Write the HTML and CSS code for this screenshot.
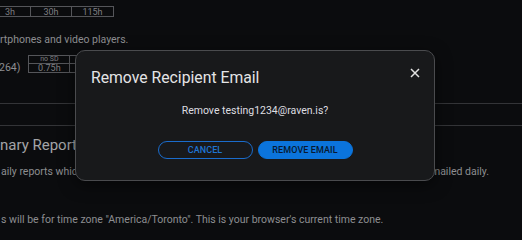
FILE: index.html
```html
<!DOCTYPE html>
<html>
<head>
<meta charset="utf-8">
<link rel="stylesheet" href="styles.css">
</head>
<body>
<div class="page">
  <table class="hours">
    <tr><td>3h</td><td>30h</td><td class="wide">115h</td></tr>
  </table>
  <p class="text l1">rtphones and video players.</p>
  <div class="codec">
    <span class="text codec-label">264)</span>
    <table class="mini">
      <tr class="mini-head"><td class="c1">no SD</td><td class="c2"></td><td class="c3"></td></tr>
      <tr class="mini-body"><td class="c1">0.75h</td><td class="c2"></td><td class="c3"></td></tr>
    </table>
  </div>
  <hr class="rule r1">
  <hr class="rule r2">
  <h2 class="heading">nary Report</h2>
  <p class="text daily"><span>aily reports whic</span><span class="tail">mailed daily.</span></p>
  <p class="text tz">s will be for time zone "America/Toronto". This is your browser's current time zone.</p>
</div>

<div class="dialog">
  <div class="dialog-head">
    <h1 class="dialog-title">Remove Recipient Email</h1>
    <svg class="close" width="10" height="10" viewBox="0 0 10 10"><path d="M1 1 L9 9 M9 1 L1 9" stroke="#e2e2e2" stroke-width="1.5" fill="none"/></svg>
  </div>
  <p class="dialog-msg">Remove testing1234@raven.is?</p>
  <div class="dialog-actions">
    <button class="btn btn-outline">CANCEL</button>
    <button class="btn btn-fill">REMOVE EMAIL</button>
  </div>
</div>
</body>
</html>
```
FILE: styles.css
```css
html, body {
  margin: 0;
  padding: 0;
}
body {
  width: 522px;
  height: 236px;
  overflow: hidden;
  background: #0b0c0e;
  font-family: Roboto, "Liberation Sans", sans-serif;
  position: relative;
}
.page {
  padding-top: 6px;
}
.hours {
  border-collapse: collapse;
  margin-left: -11px;
  font-size: 9px;
  color: #7e7f82;
}
.hours td {
  border: 1px solid #55565a;
  width: 41px;
  height: 8px;
  padding: 0;
  line-height: 8px;
  text-align: center;
  vertical-align: top;
  padding-top: 1px;
  box-sizing: border-box;
}
.hours td.wide {
  width: 42px;
}
.text {
  font-size: 10.5px;
  line-height: 14px;
  color: #8d8e91;
  margin: 0;
  white-space: nowrap;
}
.l1 {
  margin-top: 16px;
}
.codec {
  display: flex;
  align-items: flex-start;
  margin-top: 8px;
  gap: 8px;
  margin-left: -1px;
}
.codec-label {
  margin-top: 6px;
}
.mini {
  border-collapse: collapse;
  color: #7e7f82;
}
.mini td {
  border: 1px solid #55565a;
  padding: 0;
  height: 7px;
  text-align: center;
  white-space: nowrap;
}
.mini-head td {
  font-size: 7px;
  line-height: 7px;
}
.mini-body td {
  font-size: 9px;
  line-height: 7px;
  vertical-align: top;
  padding-top: 1px;
}
.mini .c1 { width: 40px; }
.mini .c2 { width: 8px; }
.mini .c3 { width: 30px; }
.rule {
  border: 0;
  border-top: 1px solid #333437;
  margin: 0;
  height: 0;
}
.r1 { margin-top: 28px; }
.r2 { margin-top: 21px; }
.heading {
  margin: 9px 0 0 0;
  font-size: 15px;
  line-height: 20px;
  font-weight: 400;
  color: #a3a4a7;
  white-space: nowrap;
}
.daily {
  margin-top: 10px;
  display: flex;
  padding-left: 1px;
}
.tail {
  margin-left: auto;
  margin-right: 33px;
}
.tz {
  margin-top: 34px;
  padding-left: 1px;
}

.dialog {
  position: absolute;
  left: 75px;
  top: 50px;
  width: 360px;
  box-sizing: border-box;
  background: #18191b;
  border: 1px solid #4a4b4e;
  border-radius: 10px;
  padding: 17px 14px 21px 15px;
  box-shadow: 0 4px 16px rgba(0,0,0,0.5);
}
.dialog-head {
  display: flex;
  justify-content: space-between;
  align-items: flex-start;
}
.dialog-title {
  margin: 0;
  font-size: 15.75px;
  line-height: 20px;
  font-weight: 400;
  color: #e4e4e6;
}
.close {
  display: block;
  margin-top: 0;
}
.dialog-msg {
  margin: 16px 0 0 0;
  font-size: 10.5px;
  line-height: 14px;
  color: #dedee0;
  text-align: center;
  padding-right: 1px;
}
.dialog-actions {
  margin-top: 23px;
  display: flex;
  justify-content: center;
  gap: 5px;
  padding-right: 1px;
}
.btn {
  width: 95px;
  height: 18px;
  box-sizing: border-box;
  border-radius: 9px;
  font-family: Roboto, "Liberation Sans", sans-serif;
  font-size: 9px;
  font-weight: 500;
  letter-spacing: 0.1px;
  padding: 0;
  line-height: 16px;
  cursor: pointer;
}
.btn-outline {
  background: transparent;
  border: 1px solid #1a6ccc;
  color: #1f74d4;
}
.btn-fill {
  background: #0b74dc;
  border: 1px solid #0b74dc;
  color: #071a31;
}
```
